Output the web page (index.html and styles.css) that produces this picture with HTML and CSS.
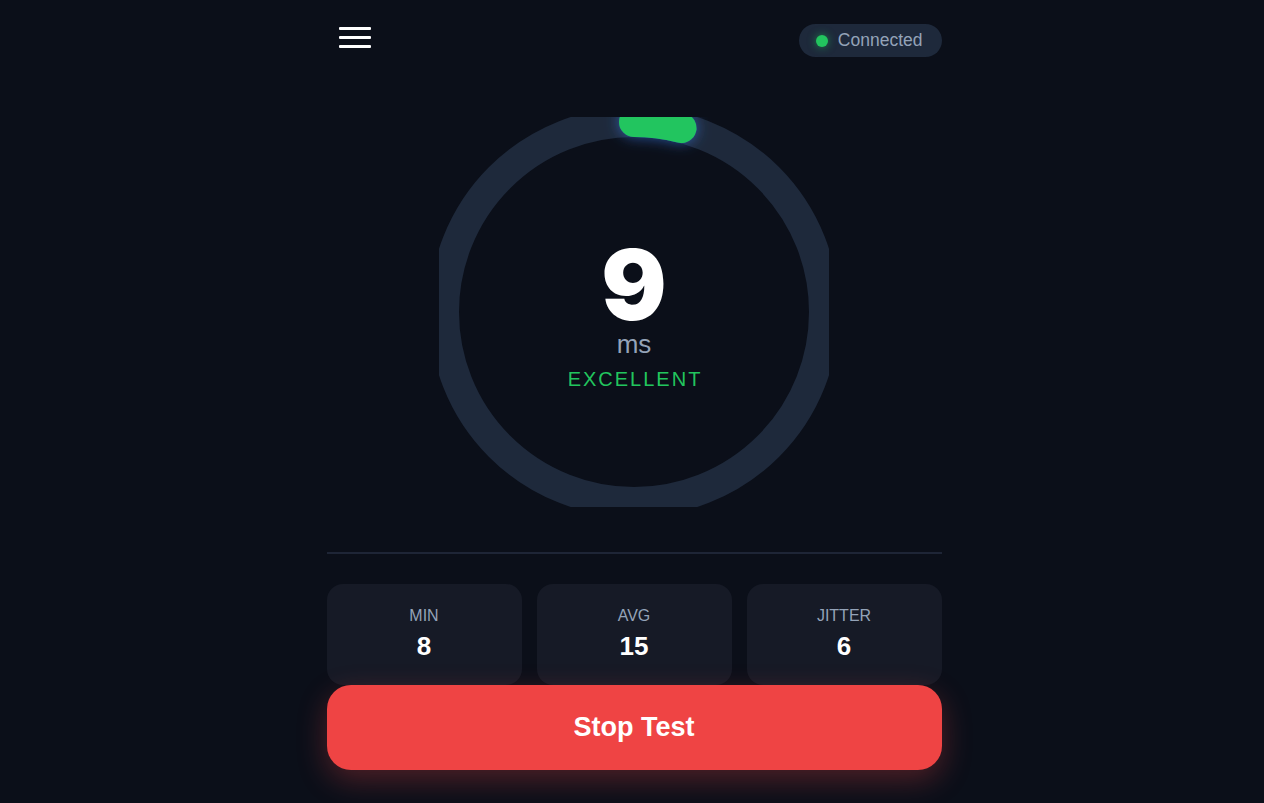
FILE: index.html
```html
<!DOCTYPE html>
<html lang="en">
<head>
<meta charset="utf-8">
<title>Ping Test</title>
<link rel="stylesheet" href="styles.css">
</head>
<body>
<div class="app">
  <header class="topbar">
    <button class="menu" aria-label="Menu">
      <span class="bar"></span><span class="bar"></span><span class="bar"></span>
    </button>
    <div class="status"><span class="dot"></span><span class="status-text">Connected</span></div>
  </header>

  <section class="gauge">
    <svg class="ring" width="390" height="390" viewBox="0 0 390 390">
      <defs>
        <filter id="glow" x="-50%" y="-50%" width="200%" height="200%">
          <feDropShadow dx="0" dy="0" stdDeviation="7" flood-color="#3b82f6" flood-opacity="0.6"/>
        </filter>
      </defs>
      <circle cx="195" cy="195" r="190" fill="none" stroke="#1e293b" stroke-width="30"/>
      <circle cx="195" cy="195" r="190" fill="none" stroke="#22c55e" stroke-width="30" stroke-linecap="round" stroke-dasharray="48 1300" transform="rotate(-90 195 195)" filter="url(#glow)"/>
    </svg>
    <div class="readout">
      <div class="value">9</div>
      <div class="unit">ms</div>
      <div class="grade">EXCELLENT</div>
    </div>
  </section>

  <div class="divider"></div>

  <div class="stats">
    <div class="stat"><div class="stat-label">MIN</div><div class="stat-value">8</div></div>
    <div class="stat"><div class="stat-label">AVG</div><div class="stat-value">15</div></div>
    <div class="stat"><div class="stat-label">JITTER</div><div class="stat-value">6</div></div>
  </div>

  <button class="stop">Stop Test</button>
</div>
</body>
</html>
```
FILE: styles.css
```css
* { box-sizing: border-box; }
html, body { height: 100%; }
body {
  margin: 0;
  background: #0b0f19;
  font-family: "Liberation Sans", Arial, sans-serif;
  color: #fff;
  overflow: hidden;
}
.app {
  width: 615px;
  margin: 0 auto;
  padding-top: 24px;
  position: relative;
  left: 2px;
}
.topbar {
  display: flex;
  justify-content: space-between;
  align-items: flex-start;
}
.menu {
  margin: 3px 0 0 12px;
  padding: 0;
  border: 0;
  background: none;
  width: 32px;
  display: flex;
  flex-direction: column;
  gap: 6px;
  cursor: pointer;
}
.bar {
  display: block;
  width: 32px;
  height: 3px;
  background: #fff;
  border-radius: 1px;
}
.status {
  display: flex;
  align-items: center;
  gap: 10px;
  height: 33px;
  padding: 0 19px 0 17px;
  border-radius: 17px;
  background: #1e293b;
}
.dot {
  width: 12px;
  height: 12px;
  border-radius: 50%;
  background: #22c55e;
  box-shadow: 0 0 8px rgba(34, 197, 94, 0.6);
}
.status-text {
  font-size: 17.5px;
  line-height: 19px;
  color: #94a3b8;
}
.gauge {
  margin-top: 60px;
  display: grid;
  justify-content: center;
  align-items: center;
  justify-items: center;
}
.ring, .readout { grid-area: 1 / 1; }
.ring { display: block; overflow: hidden; }
.readout {
  display: flex;
  flex-direction: column;
  align-items: center;
  padding-top: 7px;
}
.value {
  font-family: Inter, "Liberation Sans", sans-serif;
  font-size: 97px;
  line-height: 90px;
  font-weight: 900;
  color: #fff;
}
.unit {
  margin-top: 1px;
  font-size: 26px;
  line-height: 26px;
  color: #94a3b8;
}
.grade {
  margin-top: 10px;
  font-size: 20px;
  line-height: 24px;
  letter-spacing: 2px;
  margin-right: -2px;
  color: #22c55e;
}
.divider {
  margin-top: 45px;
  height: 2px;
  background: #1e2536;
}
.stats {
  margin-top: 30px;
  display: grid;
  grid-template-columns: repeat(3, 1fr);
  gap: 15px;
}
.stat {
  background: #161a26;
  border-radius: 16px;
  padding: 23px 12px 24px;
  display: flex;
  flex-direction: column;
  align-items: center;
  gap: 6px;
}
.stat-label {
  font-size: 16px;
  line-height: 18px;
  color: #94a3b8;
}
.stat-value {
  font-size: 26px;
  line-height: 30px;
  font-weight: 700;
  color: #fff;
}
.stop {
  display: block;
  width: 100%;
  height: 85px;
  border: 0;
  border-radius: 24px;
  background: #ef4444;
  color: #fff;
  font-family: "Liberation Sans", Arial, sans-serif;
  font-size: 27px;
  font-weight: 700;
  box-shadow: 0 10px 30px rgba(239, 68, 68, 0.3);
  cursor: pointer;
  position: relative;
}
```
